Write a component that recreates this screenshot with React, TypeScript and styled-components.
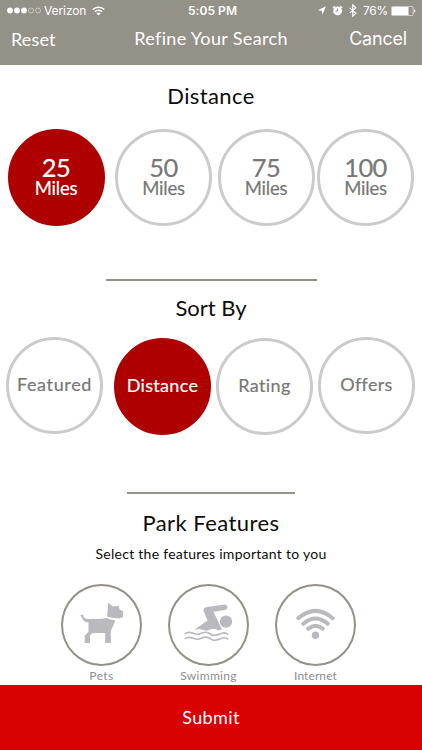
import React from "react";
import styled, { createGlobalStyle } from "styled-components";

const GlobalStyle = createGlobalStyle`
  * { box-sizing: border-box; }
  body { margin: 0; background: #fff; }
  button { border: 0; padding: 0; background: none; font-family: inherit; }
`;

const Screen = styled.div`
  width: 422px;
  height: 750px;
  display: flex;
  flex-direction: column;
  overflow: hidden;
  background: #fff;
  color: #0c0c0c;
  font-family: Lato, "Noto Sans", sans-serif;
`;

const Header = styled.header`
  flex: none;
  height: 65px;
  background: #949189;
  color: #fff;
`;

const StatusBar = styled.div`
  display: grid;
  grid-template-columns: 1fr auto 1fr;
  align-items: center;
  height: 21px;
  padding: 0 6px 0 7px;
  font: 400 12px/21px Inter, sans-serif;
`;

const StatusGroup = styled.div<{ $end?: boolean }>`
  display: flex;
  align-items: center;
  justify-content: ${(p) => (p.$end ? "flex-end" : "flex-start")};
  height: 21px;
  svg { display: block; flex: none; }
`;

const Carrier = styled.span`
  margin: 0 6px 0 2px;
  font-size: 12px;
  letter-spacing: -0.1px;
`;

const Clock = styled.span`
  padding-left: 2px;
  font-weight: 600;
  letter-spacing: 0.05px;
`;

const Percent = styled.span`
  margin: 0 3px 0 6px;
  letter-spacing: -0.3px;
`;

const NavBar = styled.nav`
  display: grid;
  grid-template-columns: 1fr auto 1fr;
  padding: 5px 15px 0 11px;
`;

const NavTitle = styled.h1`
  margin: 0;
  padding-left: 4px;
  font-size: 18px;
  font-weight: 400;
  line-height: 24px;
  letter-spacing: 0.34px;
`;

const NavButton = styled.button<{ $end?: boolean }>`
  justify-self: ${(p) => (p.$end ? "end" : "start")};
  padding-top: ${(p) => (p.$end ? 1 : 0)}px;
  color: #fff;
  font-family: ${(p) => (p.$end ? "Inter, sans-serif" : "inherit")};
  font-size: 18px;
  line-height: 24px;
  letter-spacing: ${(p) => (p.$end ? -0.2 : 0.15)}px;
`;

const Content = styled.main`
  flex: none;
  height: 620px;
  overflow: hidden;
`;

const Heading = styled.h2<{ $top: number; $spacing: number }>`
  margin: ${(p) => p.$top}px 0 0;
  font-size: 22px;
  font-weight: 400;
  line-height: 28px;
  letter-spacing: ${(p) => p.$spacing}px;
  text-align: center;
`;

const ChoiceRow = styled.div<{ $columns: string; $left: number }>`
  display: grid;
  grid-template-columns: ${(p) => p.$columns};
  padding-left: ${(p) => p.$left}px;
`;

const Choice = styled.button<{ $active?: boolean; $drop: number }>`
  display: flex;
  flex-direction: column;
  align-items: center;
  justify-content: center;
  width: 97px;
  height: 97px;
  margin-top: ${(p) => p.$drop}px;
  border-radius: 50%;
  border: 3px solid ${(p) => (p.$active ? "#ae0000" : "#cbcbcb")};
  background: ${(p) => (p.$active ? "#ae0000" : "#fff")};
  color: ${(p) => (p.$active ? "#fff" : "#777")};
  -webkit-text-stroke: 0.2px currentColor;
`;

const Amount = styled.span`
  font-size: 25.5px;
  line-height: 24px;
  letter-spacing: -0.6px;
`;

const Unit = styled.span`
  padding-bottom: 2px;
  font-size: 18.5px;
  line-height: 19px;
  letter-spacing: -0.2px;
`;

const ChoiceLabel = styled.span<{ $spacing: number }>`
  padding-bottom: 3px;
  font-size: 18px;
  line-height: 24px;
  letter-spacing: ${(p) => p.$spacing}px;
  white-space: nowrap;
`;

const Divider = styled.hr<{ $width: number; $top: number }>`
  width: ${(p) => p.$width}px;
  height: 2px;
  margin: ${(p) => p.$top}px auto 0;
  border: 0;
  background: #949189;
`;

const Hint = styled.p`
  margin: 7px 0 0;
  font-size: 14px;
  line-height: 20px;
  letter-spacing: 0.27px;
  text-align: center;
`;

const FeatureRow = styled.div`
  display: flex;
  gap: 26px;
  padding: 20px 0 0 61px;
`;

const Feature = styled.div`
  display: flex;
  flex-direction: column;
  align-items: center;
  width: 81px;
`;

const FeatureCircle = styled.button`
  display: block;
  width: 81px;
  height: 82px;
  border: 2px solid #949189;
  border-radius: 50%;
  svg { display: block; }
`;

const FeatureLabel = styled.span<{ $spacing: number }>`
  margin-top: 3px;
  color: #8e8e8e;
  font-size: 12px;
  line-height: 14px;
  letter-spacing: ${(p) => p.$spacing}px;
`;

const Submit = styled.button`
  flex: none;
  height: 65px;
  padding-bottom: 2px;
  background: #d80000;
  color: #fff;
  font-size: 18px;
  line-height: 24px;
  letter-spacing: 0.4px;
`;

const SignalDots = () => (
  <svg width="35" height="9" viewBox="0 0 35 9">
    {[3, 10, 17].map((x) => <circle key={x} cx={x} cy="4.5" r="2.9" fill="#fff" />)}
    {[24, 31].map((x) => <circle key={x} cx={x} cy="4.5" r="2.5" fill="none" stroke="#fff" strokeWidth=".6" opacity=".8" />)}
  </svg>
);

const WifiSmall = () => (
  <svg width="13" height="10" viewBox="0 0 13 10" fill="none" stroke="#fff" strokeWidth="1.5">
    <path d="M.7 3.5a8.4 8.4 0 0 1 11.6 0M2.8 5.8a5.3 5.3 0 0 1 7.4 0" />
    <path d="M6.5 9.6 4.4 7.5a3 3 0 0 1 4.2 0z" fill="#fff" stroke="none" />
  </svg>
);

const StatusIcons = () => (
  <svg width="42" height="15" viewBox="0 0 42 15" fill="none" stroke="#fff">
    <path d="M11 3.2 7.4 11.8 6.8 7.8 2.8 7.2z" fill="#fff" stroke="none" />
    <circle cx="22.6" cy="7.9" r="4.4" fill="#fff" stroke="none" />
    <path d="M18 5 19.9 3.3M25.3 3.3 27.2 5" strokeWidth="1.4" />
    <path d="M22.6 5.5v2.6h-2" stroke="#949189" strokeWidth="1" />
    <path d="m34.7 4.9 6.2 5.3-3.1 3V1.8l3.1 3-6.2 5.3" strokeWidth="1.2" />
  </svg>
);

const Battery = () => (
  <svg width="25" height="10" viewBox="0 0 25 10">
    <rect x=".4" y=".4" width="21.7" height="9.2" rx="1.2" fill="none" stroke="#fff" strokeWidth=".7" opacity=".85" />
    <rect x="1" y="1" width="16.5" height="8" rx=".5" fill="#fff" />
    <path d="M23.2 3.3q1.2.3 1.2 1.7t-1.2 1.7z" fill="#fff" />
  </svg>
);

const DogIcon = () => (
  <svg width="77" height="78" viewBox="0 0 77 78" fill="#b9b9be">
    <path d="M45.2 16.5 49.8 20.5 55.5 19.7 56.8 23.7 60.2 25 60 31.1 56.5 32.4 49.2 31.7 44.2 30.8z" />
    <path d="M43.8 31.9Q49.5 34.5 52 33.7L51.6 36.5 47.8 45V56.9H42.2V47H34.8Q32 46.7 29.2 47.3L27 49.5V56.9H21.7V50L25.5 45.5V36.6Q20.2 36.2 19 31.8L17.6 29.9Q17.2 28.7 18.7 28.6 20.7 28.7 20.7 30.8 21.8 33.2 25.7 33.1L38.8 32.7Z" />
  </svg>
);

const SwimIcon = () => (
  <svg width="77" height="78" viewBox="0 0 77 78" fill="#b9b9be">
    <circle cx="56" cy="35.6" r="6.2" />
    <path d="M25.5 42.9 37.6 34.5 33.6 25.3Q33.2 21.4 37 20.9L54.8 18.5Q57.6 18.8 57.5 21.6 57.2 23.9 54.8 24.1L43.5 25.8 51.8 43.3 48.5 44.4Q43.5 41.7 39.5 43.7 35.5 45.5 31.7 43.5 28.3 42 24.7 44.2z" />
    <g fill="none" stroke="#b9b9be" strokeWidth="1.6">
      <path d="M14.8 48.1c5.4-5 9.4 1.8 14.3-.1s7.6-2.9 11.4 0 7.2 1.1 10.4-.4 5.1-.9 7.4.8" />
      <path d="M14.8 53c5.4-5 9.4 1.8 14.3-.1s7.6-2.9 11.4 0 7.2 1.1 10.4-.4 5.1-.9 7.4.8" />
    </g>
  </svg>
);

const WifiIcon = () => (
  <svg width="77" height="78" viewBox="0 0 77 78" fill="none" stroke="#b9b9be" strokeWidth="4" strokeLinecap="round">
    <path d="M21.3 32.2Q38.5 17.6 55.7 32.2M26.2 37.8Q38.5 27.2 50.8 37.8M31.2 42.8Q38.5 36.6 45.8 42.8" />
    <circle cx="38.5" cy="49.3" r="3.7" fill="#b9b9be" stroke="none" />
  </svg>
);

const distances = ["25", "50", "75", "100"];
const sorts = [
  { label: "Featured", spacing: 0.65, drop: 0 },
  { label: "Distance", spacing: 0.3, drop: 1, active: true },
  { label: "Rating", spacing: 0.4, drop: 1 },
  { label: "Offers", spacing: 0.3, drop: 0 },
];
const features = [
  { label: "Pets", spacing: 0.4, Icon: DogIcon },
  { label: "Swimming", spacing: 0.3, Icon: SwimIcon },
  { label: "Internet", spacing: 0.1, Icon: WifiIcon },
];

export default function App() {
  return (
    <Screen>
      <GlobalStyle />
      <Header>
        <StatusBar>
          <StatusGroup>
            <SignalDots />
            <Carrier>Verizon</Carrier>
            <WifiSmall />
          </StatusGroup>
          <Clock>5:05 PM</Clock>
          <StatusGroup $end>
            <StatusIcons />
            <Percent>76%</Percent>
            <Battery />
          </StatusGroup>
        </StatusBar>
        <NavBar>
          <NavButton>Reset</NavButton>
          <NavTitle>Refine Your Search</NavTitle>
          <NavButton $end>Cancel</NavButton>
        </NavBar>
      </Header>
      <Content>
        <Heading $top={17} $spacing={0.4}>Distance</Heading>
        <ChoiceRow $columns="107.5px 102.5px 99.5px 97px" $left={7.5}>
          {distances.map((d, i) => (
            <Choice key={d} $active={i === 0} $drop={19}>
              <Amount>{d}</Amount>
              <Unit>Miles</Unit>
            </Choice>
          ))}
        </ChoiceRow>
        <Divider $width={211} $top={53} />
        <Heading $top={13} $spacing={0}>Sort By</Heading>
        <ChoiceRow $columns="108px 102px 102px 97px" $left={6}>
          {sorts.map((s) => (
            <Choice key={s.label} $active={s.active} $drop={15 + s.drop}>
              <ChoiceLabel $spacing={s.spacing}>{s.label}</ChoiceLabel>
            </Choice>
          ))}
        </ChoiceRow>
        <Divider $width={168} $top={57} />
        <Heading $top={15} $spacing={0.45}>Park Features</Heading>
        <Hint>Select the features important to you</Hint>
        <FeatureRow>
          {features.map(({ label, spacing, Icon }) => (
            <Feature key={label}>
              <FeatureCircle aria-label={label}><Icon /></FeatureCircle>
              <FeatureLabel $spacing={spacing}>{label}</FeatureLabel>
            </Feature>
          ))}
        </FeatureRow>
      </Content>
      <Submit>Submit</Submit>
    </Screen>
  );
}
